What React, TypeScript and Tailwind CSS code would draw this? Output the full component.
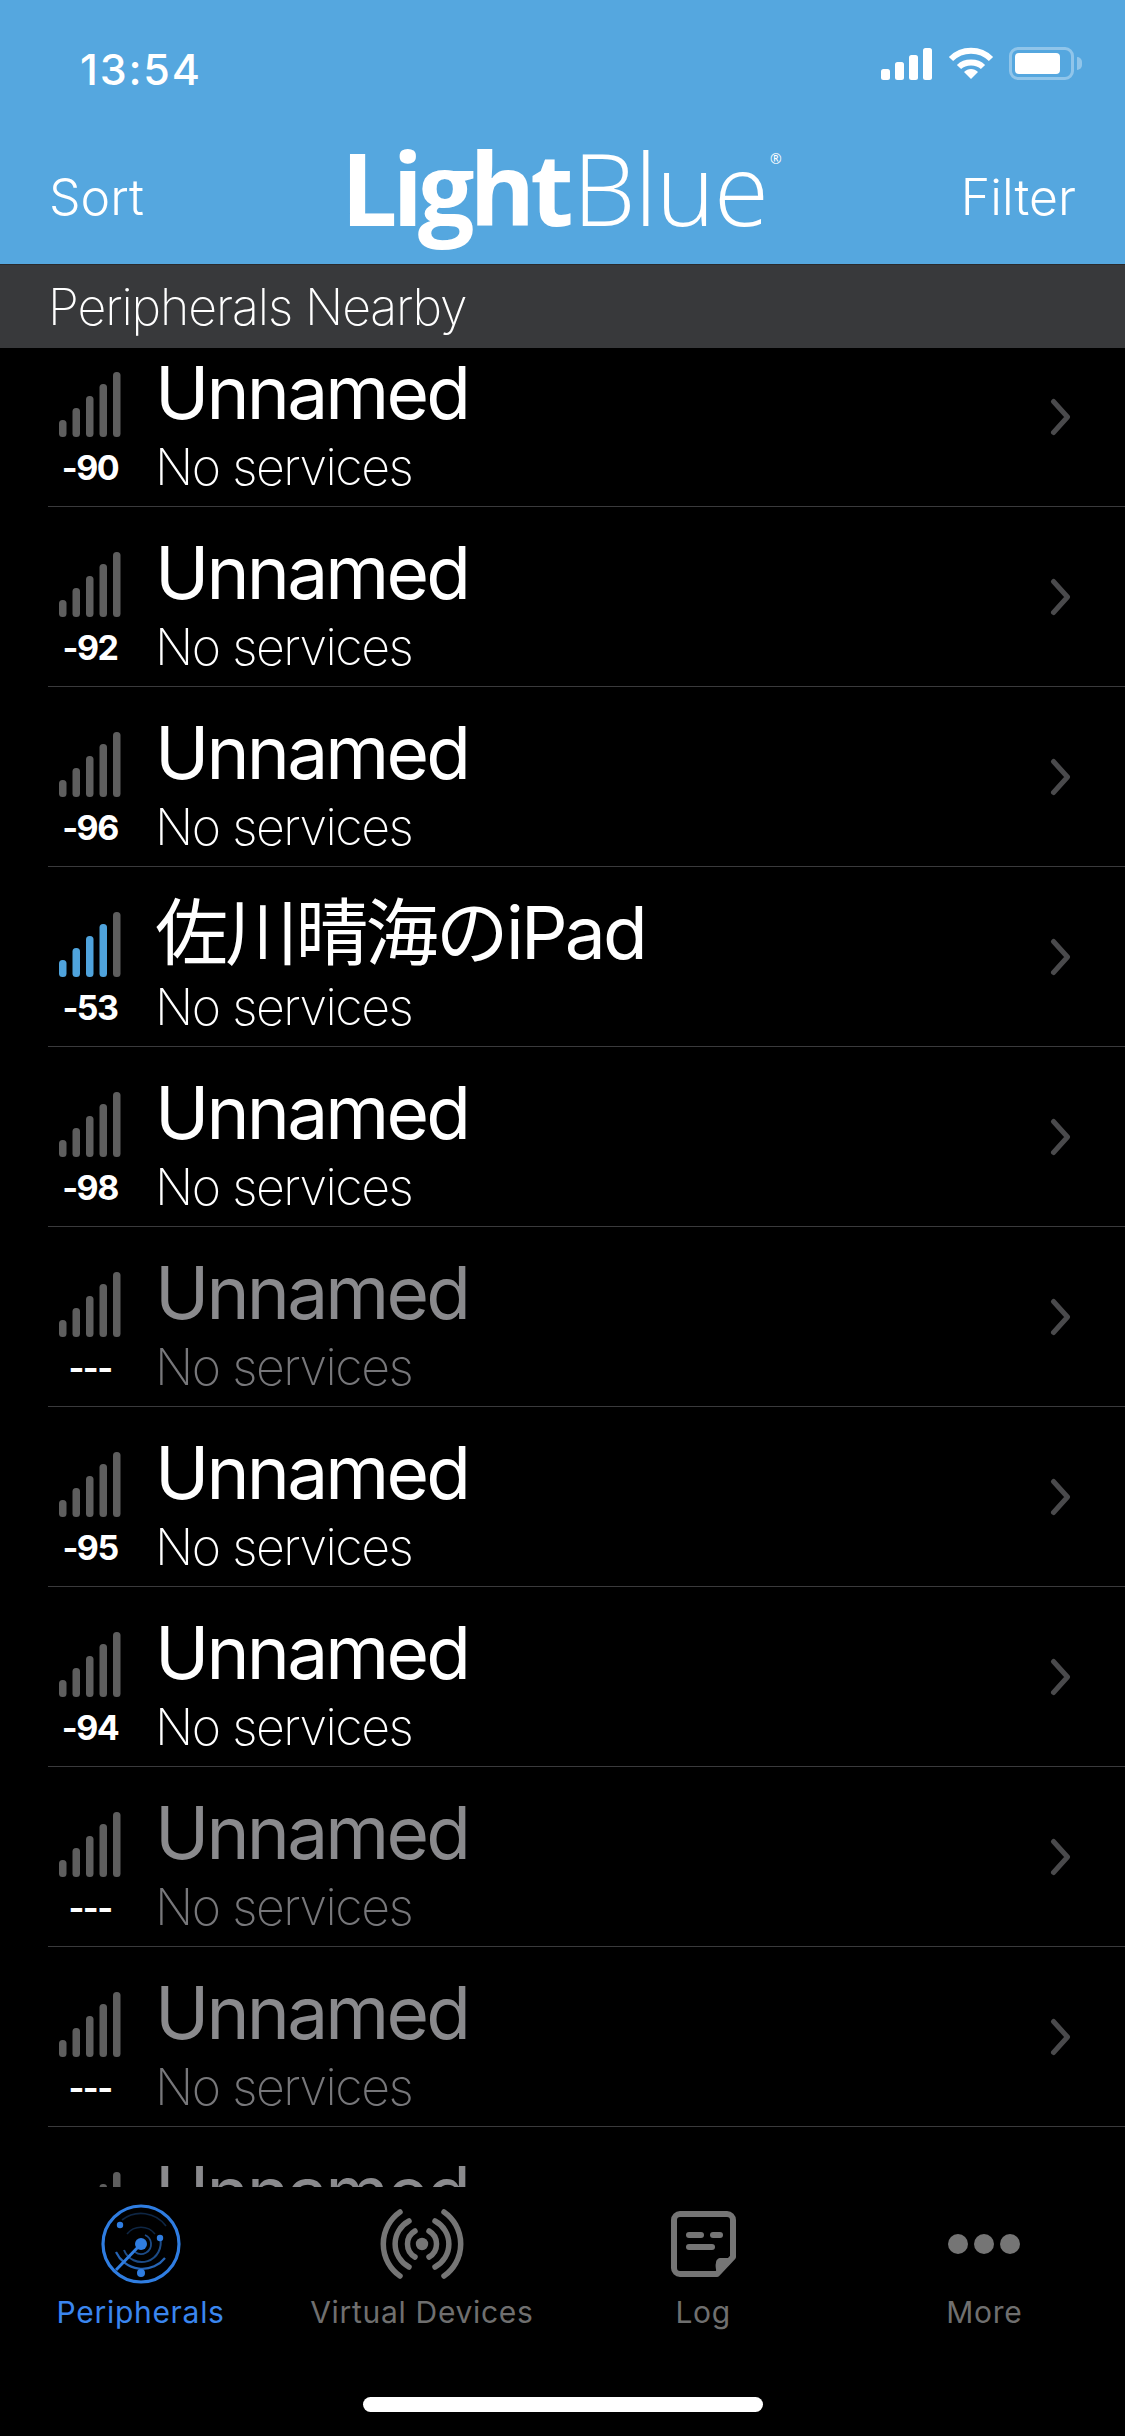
import React from "react";

type Device = { name: string; rssi: string; level?: number; stale?: boolean };

const devices: Device[] = [
  { name: "Unnamed", rssi: "-90" },
  { name: "Unnamed", rssi: "-92" },
  { name: "Unnamed", rssi: "-96" },
  { name: "佐川晴海のiPad", rssi: "-53", level: 4 },
  { name: "Unnamed", rssi: "-98" },
  { name: "Unnamed", rssi: "---", stale: true },
  { name: "Unnamed", rssi: "-95" },
  { name: "Unnamed", rssi: "-94" },
  { name: "Unnamed", rssi: "---", stale: true },
  { name: "Unnamed", rssi: "---", stale: true },
  { name: "Unnamed", rssi: "---", stale: true },
];

const SignalBars = ({ level = 0 }: { level?: number }) => (
  <svg width="62" height="65" viewBox="0 0 62 65" className="block">
    {[0, 1, 2, 3, 4].map((i) => {
      const h = 17 + i * 12;
      return (
        <rect
          key={i}
          x={i * 13.5}
          y={65 - h}
          width="7.5"
          height={h}
          rx="3.5"
          fill={i < level ? "#4fa3dc" : "#5e5e5e"}
        />
      );
    })}
  </svg>
);

const DeviceRow = ({ device }: { device: Device }) => (
  <div className="flex h-[180px] shrink-0 border-b border-[#3a3a3c] pl-[10px]">
    <div className="flex w-[64px] shrink-0 flex-col items-center pt-[45px]">
      <SignalBars level={device.level} />
      <span className="mt-[11px] text-[34px] leading-[40px] font-bold tracking-[-1.5px] text-white">
        {device.rssi}
      </span>
    </div>
    <div className="ml-[33px] flex min-w-0 flex-1 flex-col pt-[22px]">
      <span
        className={`text-[73px] leading-[88px] font-normal tracking-[-2.8px] ${device.stale ? "text-[#8a8a8d]" : "text-white"}`}
      >
        {device.name}
      </span>
      <span
        className={`text-[50px] leading-[60px] font-extralight tracking-[-1.5px] ${device.stale ? "text-[#77777a]" : "text-white"}`}
      >
        No services
      </span>
    </div>
    <div className="flex w-[75px] items-center">
      <svg width="26" height="38" viewBox="0 0 26 38" fill="none">
        <path d="M3.5 3.5L17.5 19L3.5 34.5" stroke="#4a4a4c" strokeWidth="5" strokeLinecap="round" strokeLinejoin="round" />
      </svg>
    </div>
  </div>
);

const RadarIcon = () => (
  <svg width="82" height="82" viewBox="-41 -41 82 82" fill="none" stroke="#2f7de1">
    <circle r="38" strokeWidth="3.2" />
    <path d="M-19 -24A31 31 0 0 1 25 -18" strokeWidth="1.6" opacity="0.3" />
    <path d="M-14 -10A18 18 0 0 1 14 -10" strokeWidth="1.6" opacity="0.3" />
    <path d="M-25 8A29 29 0 0 0 24 14" strokeWidth="2.2" opacity="0.8" />
    <path d="M-17 6A19 19 0 0 0 19 -6" strokeWidth="2" opacity="0.6" />
    <path d="M-6 8A10 10 0 0 0 10 -1A10 10 0 0 0 4 -9" strokeWidth="1.8" opacity="0.6" />
    <path d="M0 0L-25 26" strokeWidth="3" />
    <g fill="#2f7de1" stroke="none">
      <circle r="6" />
      <circle cx="-21" cy="-19" r="3.2" />
      <circle cx="19" cy="-6" r="3.2" />
      <circle cx="0" cy="29" r="4" />
    </g>
  </svg>
);

const BroadcastIcon = () => (
  <svg width="86" height="72" viewBox="-43 -36 86 72" fill="none" stroke="#757575" strokeWidth="5.5" strokeLinecap="round">
    <circle r="6.2" fill="#757575" stroke="none" />
    <path d="M-7 -13A15 15 0 0 0 -7 13M7 -13A15 15 0 0 1 7 13" />
    <path d="M-13 -23A26 26 0 0 0 -13 23M13 -23A26 26 0 0 1 13 23" />
    <path d="M-22 -32A39 39 0 0 0 -22 32M22 -32A39 39 0 0 1 22 32" />
  </svg>
);

const LogIcon = () => (
  <svg width="65" height="66" viewBox="0 0 65 66" fill="none">
    <path
      d="M9 3H56A6 6 0 0 1 62 9V46L46 63H9A6 6 0 0 1 3 57V9A6 6 0 0 1 9 3Z"
      stroke="#757575"
      strokeWidth="6"
      strokeLinejoin="round"
    />
    <path d="M50 47H64L47 65C45 60 44 54 45 52C45 49 47 47 50 47Z" fill="#757575" />
    <g stroke="#757575" strokeWidth="6" strokeLinecap="round">
      <path d="M18 24H30" />
      <path d="M42 24H49" />
      <path d="M18 36H41" />
    </g>
  </svg>
);

const MoreIcon = () => (
  <svg width="72" height="20" viewBox="0 0 72 20" fill="#757575">
    <circle cx="10" cy="10" r="10" />
    <circle cx="36" cy="10" r="10" />
    <circle cx="62" cy="10" r="10" />
  </svg>
);

const tabs = [
  { label: "Peripherals", icon: <RadarIcon />, active: true },
  { label: "Virtual Devices", icon: <BroadcastIcon /> },
  { label: "Log", icon: <LogIcon /> },
  { label: "More", icon: <MoreIcon /> },
];

const StatusIcons = () => (
  <div className="flex items-center gap-[15px]">
    <svg width="52" height="32" viewBox="0 0 52 32" fill="white">
      <rect x="0" y="21" width="9" height="11" rx="2.5" />
      <rect x="14" y="14" width="9" height="18" rx="2.5" />
      <rect x="28" y="7" width="9" height="25" rx="2.5" />
      <rect x="42" y="0" width="9" height="32" rx="2.5" />
    </svg>
    <svg width="46" height="33" viewBox="0 0 46 33" fill="none" stroke="white" strokeWidth="6">
      <path d="M3 12C14 1 32 1 43 12" />
      <path d="M11 20C17 14 29 14 35 20" />
      <path d="M23 32L16 25C20 21 26 21 30 25Z" fill="white" stroke="none" />
    </svg>
    <div className="flex items-center">
      <div className="flex h-[33px] w-[65px] items-center rounded-[9px] border-[3px] border-white/35 p-[3px]">
        <div className="h-full w-[45px] rounded-[4px] bg-white" />
      </div>
      <div className="ml-[3px] h-[13px] w-[5px] rounded-r-full bg-white/35" />
    </div>
  </div>
);

export default function App() {
  return (
    <div className="flex h-[2436px] w-[1125px] flex-col overflow-hidden bg-black font-['Inter','Noto_Sans_CJK_JP',sans-serif] text-white">
      <header className="h-[264px] shrink-0 bg-[#55a7df]">
        <div className="flex h-[137px] items-start justify-between pt-[47px] pr-[43px] pl-[80px]">
          <span className="text-[43px] leading-[44px] font-medium tracking-[1.8px]">13:54</span>
          <StatusIcons />
        </div>
        <div className="flex items-start justify-between pr-[49px] pl-[49px]">
          <span className="mt-[30px] text-[50px] leading-[60px] font-light">Sort</span>
          <span className="ml-[18px] flex items-start font-['Open_Sans',sans-serif] text-[100px] leading-[100px]">
            <span className="font-bold tracking-[-5px]">Light</span>
            <span className="ml-[4px] font-light tracking-[-1px]">Blue</span>
            <span className="mt-[12px] ml-[2px] text-[14px] leading-[20px] tracking-normal">®</span>
          </span>
          <span className="mt-[30px] text-[50px] leading-[60px] font-light">Filter</span>
        </div>
      </header>

      <div className="flex h-[84px] shrink-0 items-center border-t border-[#2a2a2c] bg-[#38393b] pl-[48px]">
        <span className="text-[50px] leading-[60px] font-extralight tracking-[-1.1px]">Peripherals Nearby</span>
      </div>

      <main className="h-[1839px] shrink-0 overflow-hidden pl-[48px]">
        <div className="mt-[-21px] flex flex-col">
          {devices.map((device, idx) => (
            <DeviceRow key={idx} device={device} />
          ))}
        </div>
      </main>

      <nav className="grid shrink-0 grid-cols-4 pt-[16px]">
        {tabs.map((tab) => (
          <div key={tab.label} className="flex flex-col items-center">
            <div className="flex h-[82px] items-center justify-center">{tab.icon}</div>
            <span
              className={`mt-[9px] text-[30px] leading-[36px] tracking-[0.7px] whitespace-nowrap ${tab.active ? "text-[#3a86ef]" : "text-[#6f6f6f]"}`}
            >
              {tab.label}
            </span>
          </div>
        ))}
      </nav>

      <div className="mt-auto mb-[24px] h-[15px] w-[400px] shrink-0 self-center rounded-full bg-white" />
    </div>
  );
}
